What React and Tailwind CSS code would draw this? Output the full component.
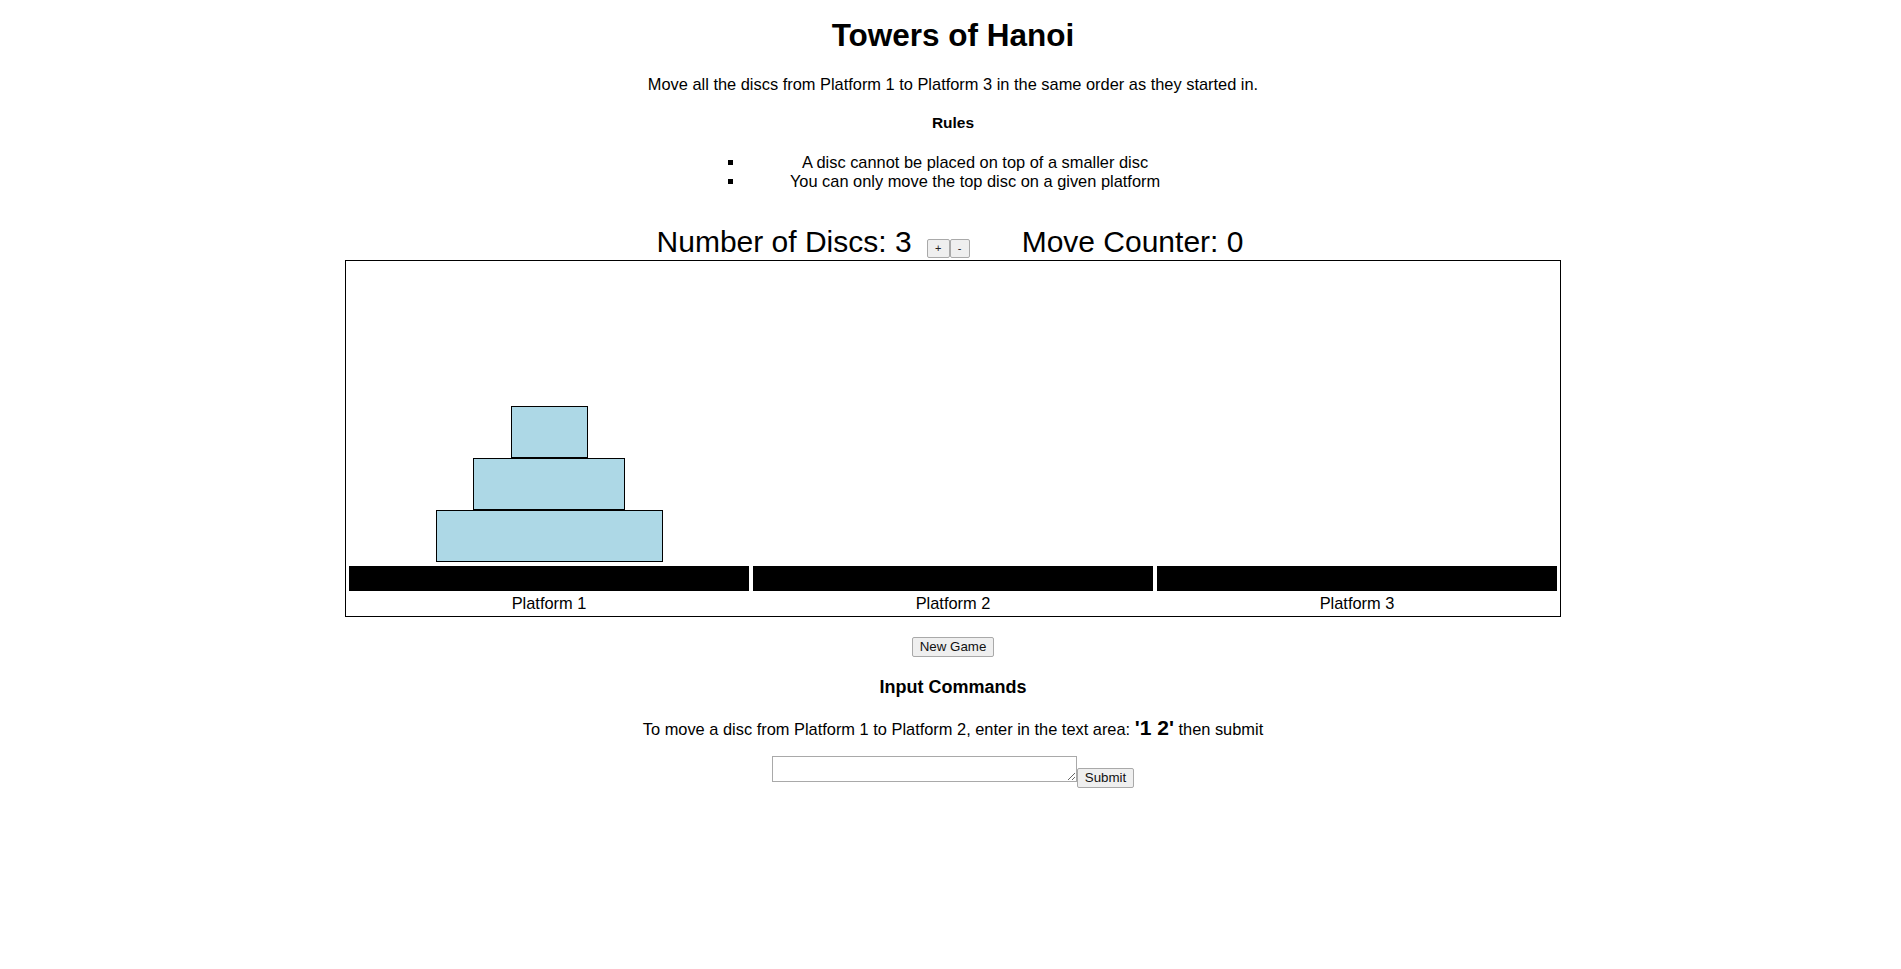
import React from "react";

const discs = [77, 152, 227];

function Platform({ label, children }) {
  return (
    <div className="w-[400px] flex flex-col">
      <div className="h-[305px] flex flex-col justify-end items-center pb-[4px]">{children}</div>
      <div className="h-[25px] bg-black"></div>
      <div className="mt-[2px] pb-[3px] leading-[20px] text-[16.4px] text-center">{label}</div>
    </div>
  );
}

export default function App() {
  return (
    <div className="min-h-[969px] bg-white text-black pl-[5px] font-['Liberation_Sans',Arial,sans-serif]">
      <h1 className="pt-[15px] text-[31.5px] font-bold leading-[40px] text-center">Towers of Hanoi</h1>
      <p className="mt-[19px] text-[16.4px] leading-[20px] text-center">
        Move all the discs from Platform 1 to Platform 3 in the same order as they started in.
      </p>
      <h4 className="mt-[19px] text-[15.5px] font-bold leading-[20px] text-center">Rules</h4>
      <div className="mt-[20px] ml-[723px] w-[494px] text-[16.4px] leading-[19px]">
        {["A disc cannot be placed on top of a smaller disc", "You can only move the top disc on a given platform"].map((t) => (
          <div key={t} className="flex items-start">
            <div className="mt-[7px] w-[5px] h-[5px] bg-black shrink-0"></div>
            <div className="ml-[12px] w-[460px] text-center">{t}</div>
          </div>
        ))}
      </div>
      <div className="mt-[35px] h-[32px] pr-[6px] flex justify-center items-baseline leading-[32px]">
        <span className="text-[30px]">Number of Discs: 3</span>
        <span className="ml-[15px] flex items-baseline">
          <button className="w-[23px] h-[19px] text-[11px] leading-[15px] bg-[#efefef] border border-[#a9a9a9] rounded-[2px] text-[#222]">+</button>
          <button className="w-[20px] h-[19px] text-[11px] leading-[15px] bg-[#efefef] border border-[#a9a9a9] rounded-[2px] text-[#222]">-</button>
        </span>
        <span className="ml-[52px] text-[30px]">Move Counter: 0</span>
      </div>
      <div className="mt-[2px] mx-auto w-[1216px] h-[357px] border border-black flex gap-[4px] px-[3px]">
        <Platform label="Platform 1">
          {discs.map((w) => (
            <div key={w} className="h-[52px] border border-black bg-[#ADD8E6] shrink-0" style={{ width: w }}></div>
          ))}
        </Platform>
        <Platform label="Platform 2" />
        <Platform label="Platform 3" />
      </div>
      <div className="mt-[20px] flex justify-center">
        <button className="w-[82px] h-[20px] text-[13.33px] leading-[16px] bg-[#efefef] border border-[#a9a9a9] rounded-[2px] text-[#111]">New Game</button>
      </div>
      <h3 className="mt-[19px] text-[18px] font-bold leading-[22px] text-center">Input Commands</h3>
      <p className="mt-[18px] text-[16.4px] leading-[24px] text-center">
        To move a disc from Platform 1 to Platform 2, enter in the text area: <strong className="text-[21px] font-bold">'1 2'</strong> then submit
      </p>
      <div className="mt-[15px] flex justify-center items-start">
        <textarea rows={1} className="w-[305px] h-[26px] min-h-0 border border-[#a9a9a9] bg-white"></textarea>
        <button className="mt-[12px] w-[57px] h-[20px] text-[13.33px] leading-[16px] bg-[#efefef] border border-[#a9a9a9] rounded-[2px] text-[#111]">Submit</button>
      </div>
    </div>
  );
}
